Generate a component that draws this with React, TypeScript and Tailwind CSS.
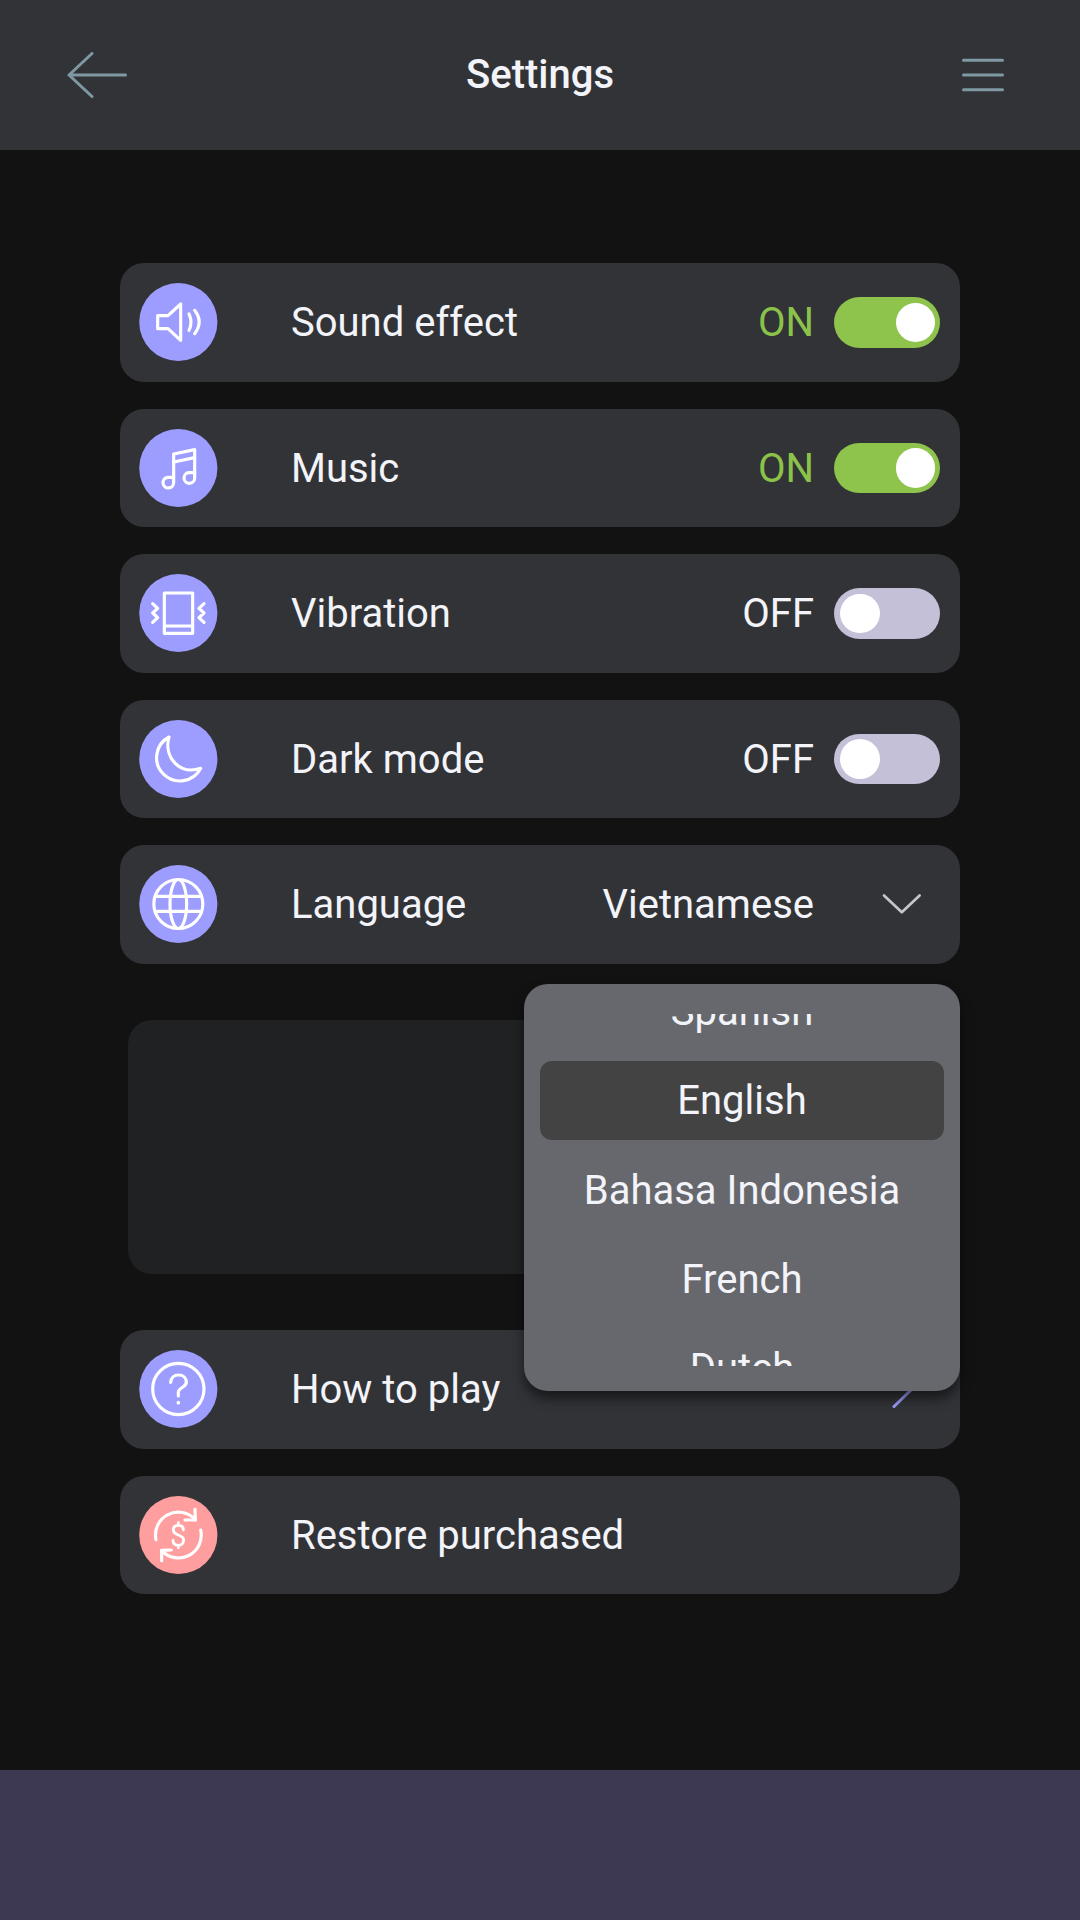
import type { ReactNode } from "react";

type Tone = "violet" | "coral";

function IconBadge({ tone = "violet", children }: { tone?: Tone; children: ReactNode }) {
  return (
    <svg
      viewBox="-118 -120 240 240"
      className="h-[80px] w-[80px] shrink-0"
      fill="none"
      stroke="#fff"
      strokeWidth="9.5"
      strokeLinecap="round"
      strokeLinejoin="round"
    >
      <circle r="117.3" stroke="none" className={tone === "coral" ? "fill-[#ff9e9e]" : "fill-[#9d9dff]"} />
      {children}
    </svg>
  );
}

function Row({ icon, tone, label, children }: { icon: ReactNode; tone?: Tone; label: string; children?: ReactNode }) {
  return (
    <div className="relative flex h-[118.5px] items-center rounded-[24px] bg-[#323337] pr-[20px] pl-[19px]">
      <IconBadge tone={tone}>{icon}</IconBadge>
      <span className="ml-[72px] pt-[2px]">{label}</span>
      {children}
    </div>
  );
}

function Toggle({ on }: { on: boolean }) {
  return (
    <div className="ml-auto flex items-center">
      <span className={on ? "mr-[20px] pt-[2px] text-[#8bc34a]" : "mr-[20px] pt-[2px]"}>{on ? "ON" : "OFF"}</span>
      <div
        className={`flex h-[50.5px] w-[106px] items-center rounded-full pr-[5px] pl-[6px] ${on ? "justify-end bg-[#8ec34c]" : "justify-start bg-[#c4c0d7]"}`}
      >
        <div className="h-[39.5px] w-[39.5px] rounded-full bg-white" />
      </div>
    </div>
  );
}

const soundIcon = (
  <>
    <path d="M-62 -19H-31L7 -54V55L-31 20H-62Z" />
    <path d="M32 -24Q44 1 32 25M49 -35Q76 0 49 35" />
  </>
);
const musicIcon = (
  <>
    <path d="M-14 43V-42L49 -55V28" />
    <path d="M-14 -18L49 -31" />
    <path d="M-14 28H-32A16 16 0 1 0 -14 43M49 14H31A16 16 0 1 0 49 28" />
  </>
);
const vibrationIcon = (
  <>
    <path d="M-42 -60H43V61H-42ZM-42 39H43" />
    <path d="M-77 -28L-62 -14L-77 0L-62 14L-77 28M77 -28L62 -14L77 0L62 14L77 28" />
  </>
);
const moonIcon = <path d="M-28 -66A70 70 0 1 0 67 28C5 50 -45 -5 -28 -66Z" />;
const globeIcon = (
  <>
    <circle r="73.5" />
    <ellipse rx="25" ry="73.5" />
    <path d="M-69 -23H69M-69 22H69" />
  </>
);
const helpIcon = (
  <>
    <circle r="77" />
    <path d="M-23 -20C-22 -34 -12 -42 1 -42C15 -42 24 -33 24 -20C24 -4 0 -5 0 10V21" />
    <circle cy="41" r="5.5" fill="#fff" stroke="none" />
  </>
);
const restoreIcon = (
  <>
    <path d="M-67 14A68.5 68.5 0 0 1 51 -46M67 -15A68.5 68.5 0 0 1 -50 47" />
    <path d="M50 -77L51 -45H20M-50 77V46L-21 45" />
    <path
      strokeWidth="8.5"
      d="M15 -15C15 -24 9 -29 0 -29C-10 -29 -15 -23 -15 -15C-15 -6 -8 -3 0 0C9 3 16 6 16 15C16 25 9 31 0 31C-10 31 -16 25 -16 16M0 -37V-29M0 31V38"
    />
  </>
);

const languages = ["Spanish", "English", "Bahasa Indonesia", "French", "Dutch"];

function LanguageMenu() {
  return (
    <div className="absolute top-[139px] right-0 z-10 h-[407px] w-[436px] rounded-[24px] bg-[#67686d] px-4 pt-[30px] shadow-[0_8px_12px_rgba(0,0,0,0.5)]">
      <div className="h-[352px] overflow-hidden">
        <div className="-mt-[42.25px] flex flex-col gap-[10.75px]">
          {languages.map((name) => (
            <div
              key={name}
              className={`flex h-[78.5px] shrink-0 items-center justify-center rounded-[12px] pt-[2px] ${name === "English" ? "bg-[#434344]" : ""}`}
            >
              {name}
            </div>
          ))}
        </div>
      </div>
    </div>
  );
}

export default function App() {
  return (
    <div className="flex h-[1920px] w-[1080px] flex-col overflow-hidden bg-[#121212] font-['Roboto',sans-serif] text-[40px] leading-none text-[#f2f4f9]">
      <header className="grid h-[150px] grid-cols-[1fr_auto_1fr] items-center bg-[#323337] px-[67px]">
        <svg width="60" height="46" viewBox="0 0 60 46" fill="none" stroke="#7f99a4" strokeWidth="3" strokeLinecap="round" strokeLinejoin="round">
          <path d="M25 1.5L2 23L25 44.5M2 23H58.5" />
        </svg>
        <h1 className="font-medium">Settings</h1>
        <svg className="mr-[9.5px] justify-self-end" width="42" height="34" viewBox="0 0 42 34" fill="none" stroke="#7f99a4" strokeWidth="3" strokeLinecap="round">
          <path d="M1.5 2.2H40.5M1.5 17H40.5M1.5 31.8H40.5" />
        </svg>
      </header>

      <main className="flex flex-1 flex-col gap-[27px] px-[120px] pt-[113px]">
        <Row icon={soundIcon} label="Sound effect"><Toggle on /></Row>
        <Row icon={musicIcon} label="Music"><Toggle on /></Row>
        <Row icon={vibrationIcon} label="Vibration"><Toggle on={false} /></Row>
        <Row icon={moonIcon} label="Dark mode"><Toggle on={false} /></Row>
        <Row icon={globeIcon} label="Language">
          <span className="ml-auto pt-[2px]">Vietnamese</span>
          <svg className="mr-[18px] ml-[68px]" width="40" height="22" viewBox="0 0 40 22" fill="none" stroke="#c5c6c9" strokeWidth="2.7" strokeLinecap="round" strokeLinejoin="round">
            <path d="M2 2.5L19.8 19.2L37.6 2.5" />
          </svg>
          <LanguageMenu />
        </Row>
        <div className="mx-[7.5px] mt-[29px] mb-[29px] h-[254.5px] rounded-[24px] bg-[#202123]" />
        <Row icon={helpIcon} label="How to play">
          <svg className="mr-[26.5px] ml-auto" width="22" height="40" viewBox="0 0 22 40" fill="none" stroke="#9d9dff" strokeWidth="3" strokeLinecap="round" strokeLinejoin="round">
            <path d="M2 2L20 20L2 37.5" />
          </svg>
        </Row>
        <Row icon={restoreIcon} tone="coral" label="Restore purchased" />
      </main>

      <footer className="h-[150px] bg-[#3e3952]" />
    </div>
  );
}
